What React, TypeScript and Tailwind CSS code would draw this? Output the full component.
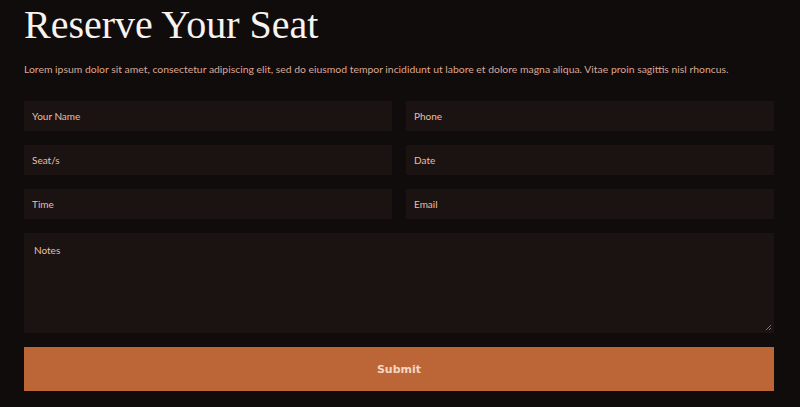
import React from "react";

const fields = [
  ["Your Name", "Phone"],
  ["Seat/s", "Date"],
  ["Time", "Email"],
];

function Field({ label }: { label: string }) {
  return (
    <div className="flex h-[30px] items-center bg-[#1b1312] px-2 text-[10px] text-[#e6bfae]">
      {label}
    </div>
  );
}

export default function App() {
  return (
    <div
      className="h-[407px] w-[800px] bg-[#110c0c] pl-6 pr-[26px] pt-[3px]"
      style={{ fontFamily: "Lato, 'Open Sans', sans-serif" }}
    >
      <h1 className="font-['Liberation_Serif',serif] text-[40px] leading-[44px] text-[#f7f3f0]">
        Reserve Your Seat
      </h1>
      <p className="mt-[15px] text-[10.4px] leading-[14px] text-[#d9a795]">
        Lorem ipsum dolor sit amet, consectetur adipiscing elit, sed do eiusmod tempor incididunt ut labore et dolore magna aliqua. Vitae proin sagittis nisl rhoncus.
      </p>
      <form className="mt-[25px] flex flex-col gap-[14px]">
        {fields.map(([a, b]) => (
          <div key={a} className="grid grid-cols-2 gap-[14px]">
            <Field label={a} />
            <Field label={b} />
          </div>
        ))}
        <div className="relative h-[100px] bg-[#1b1312] px-[10px] pt-[10px] text-[10px] text-[#e6bfae]">
          Notes
          <svg className="absolute bottom-[2px] right-[2px]" width="7" height="7" viewBox="0 0 7 7">
            <path d="M6 1 L1 6 M6 4 L4 6" stroke="#7a7370" strokeWidth="1" />
          </svg>
        </div>
        <button
          type="button"
          className="h-[44px] w-full bg-[#bc6637] pt-[3px] text-[11px] font-bold text-[#f6d6c2]"
          style={{ fontFamily: "'DejaVu Sans', sans-serif" }}
        >
          Submit
        </button>
      </form>
    </div>
  );
}
